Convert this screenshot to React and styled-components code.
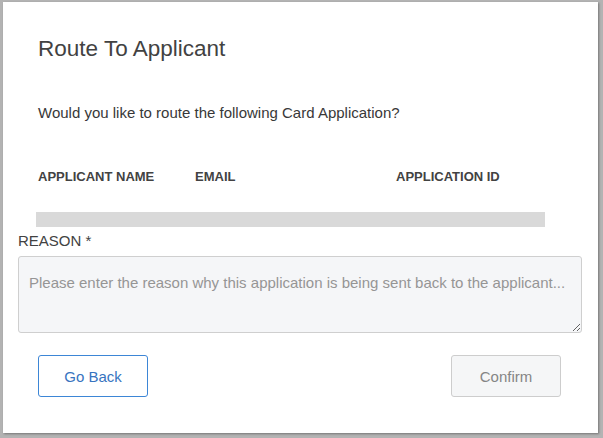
import React from "react";
import styled, { createGlobalStyle } from "styled-components";

const Global = createGlobalStyle`
  html, body { margin: 0; padding: 0; }
  body {
    background: #b3b3b3;
    font-family: "Liberation Sans", Arial, sans-serif;
    width: 603px;
    height: 438px;
    overflow: hidden;
  }
`;

const Backdrop = styled.div`
  padding: 2px 5px 5px 3px;
  width: 603px;
  height: 438px;
  box-sizing: border-box;
`;

const Dialog = styled.div`
  width: 595px;
  height: 431px;
  box-sizing: border-box;
  background: #fff;
  box-shadow: 1px 1px 2px rgba(0, 0, 0, 0.35);
  padding: 34px 16px 0 15px;
  display: flex;
  flex-direction: column;
`;

const Title = styled.h2`
  margin: 0;
  padding-left: 20px;
  font-size: 22.5px;
  line-height: 26px;
  font-weight: normal;
  color: #424242;
`;

const Prompt = styled.p`
  margin: 41.5px 0 0;
  padding-left: 20px;
  font-size: 15px;
  line-height: 18px;
  color: #383838;
`;

const Columns = styled.div`
  margin-top: 47px;
  padding-left: 20px;
  display: grid;
  grid-template-columns: 157px 201px 1fr;
`;

const ColHead = styled.div`
  font-size: 13px;
  line-height: 16px;
  font-weight: bold;
  color: #424242;
`;

const Redacted = styled.div`
  margin: 27.5px 0 0 18px;
  width: 509px;
  height: 15px;
  background: #d9d9d9;
`;

const Label = styled.label`
  margin-top: 4.5px;
  font-size: 15px;
  line-height: 18px;
  color: #424242;
`;

const Reason = styled.textarea`
  margin-top: 6.5px;
  width: 564px;
  height: 77px;
  box-sizing: border-box;
  border: 1px solid #cfcfcf;
  border-radius: 3px;
  background: #f5f6f8;
  padding: 17px 10px;
  font-family: "Liberation Sans", Arial, sans-serif;
  font-size: 15px;
  line-height: 18px;
  color: #333;
  &::placeholder { color: #959595; }
`;

const Actions = styled.div`
  margin-top: 22px;
  padding: 0 21px 0 20px;
  display: flex;
  justify-content: space-between;
`;

const Button = styled.button`
  width: 110px;
  height: 42px;
  box-sizing: border-box;
  border-radius: 3px;
  font-family: "Liberation Sans", Arial, sans-serif;
  font-size: 15px;
  cursor: pointer;
  border: ${(p) => (p.$primary ? "1.5px solid #3d86d6" : "1px solid #cdcdcd")};
  background: ${(p) => (p.$primary ? "#fff" : "#f5f6f7")};
  color: ${(p) => (p.$primary ? "#3774c0" : "#858585")};
`;

export default function App() {
  return (
    <>
      <Global />
      <Backdrop>
        <Dialog>
          <Title>Route To Applicant</Title>
          <Prompt>Would you like to route the following Card Application?</Prompt>
          <Columns>
            <ColHead>APPLICANT NAME</ColHead>
            <ColHead>EMAIL</ColHead>
            <ColHead>APPLICATION ID</ColHead>
          </Columns>
          <Redacted />
          <Label>REASON *</Label>
          <Reason placeholder="Please enter the reason why this application is being sent back to the applicant..." />
          <Actions>
            <Button $primary>Go Back</Button>
            <Button>Confirm</Button>
          </Actions>
        </Dialog>
      </Backdrop>
    </>
  );
}
